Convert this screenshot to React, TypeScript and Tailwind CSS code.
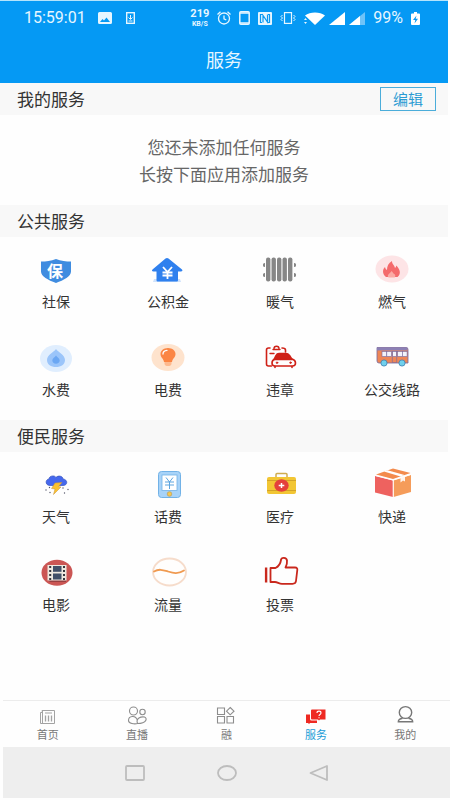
import type { ReactNode } from "react";

interface Service {
  name: string;
  icon: ReactNode;
}

interface Tab {
  name: string;
  icon: ReactNode;
  active?: boolean;
}

const publicServices: Service[] = [
  {
    name: "社保",
    icon: (
      <>
        <path d="M20 9c-5 2-10 2.500-15 2.500v10c0 5 7 8.500 15 11.500 8-3 15-6.500 15-11.500v-10c-5 0-10-.5-15-2.500z" fill="#3f8ce0" />
        <text x="19" y="26.500" textAnchor="middle" fontSize="16" fontWeight="700" fill="#fff">
          保
        </text>
      </>
    ),
  },
  {
    name: "公积金",
    icon: (
      <>
        <path d="M6 29h26l1 3H5z" fill="#cfe2fb" />
        <path d="M17.500 8.500q1.500-.8 3 0L34 19.500c1 1 0 2-1 2h-3v8.500c0 1-.5 1.500-1.500 1.500H10c-1 0-1.500-.5-1.500-1.500v-8.500h-3c-1.500 0-2-1-1-2z" fill="#2f80ee" />
        <path d="M15 17l4.500 5 4.500-5M19.500 22v7M14.500 22.500h10M14.500 25.500h10" stroke="#fff" strokeWidth="1.800" fill="none" />
      </>
    ),
  },
  {
    name: "暖气",
    icon: (
      <g fill="#868686">
        <rect x="6" y="7.500" width="4.400" height="24" rx="2" />
        <rect x="11.500" y="7.500" width="4.400" height="24" rx="2" />
        <rect x="17" y="7.500" width="4.400" height="24" rx="2" />
        <rect x="22.500" y="7.500" width="4.400" height="24" rx="2" />
        <rect x="28" y="7.500" width="4.400" height="24" rx="2" />
        <path d="M5 13v4c-2 0-2-1-2-2s0-2 2-2zM5 23v4c-2 0-2-1-2-2s0-2 2-2zM34 13v4c2 0 2-1 2-2s0-2-2-2zM34 23v4c2 0 2-1 2-2s0-2-2-2z" />
      </g>
    ),
  },
  {
    name: "燃气",
    icon: (
      <>
        <ellipse cx="20" cy="19" rx="16.500" ry="13.500" fill="#fde4e6" />
        <path d="M14 27c-4-3-3.500-8-1-10 .3 1.500 1 2.500 2 3 0-4 1.500-7 5-9-.2 3 2.500 4 3 7 .8-.6 1.200-1.500 1.200-2.500 3.500 3.500 5.500 8 1.300 11.500z" fill="#f46a6c" />
        <path d="M16.500 27.500c-1.500-2 0-3.500 1.200-4.300l2-2.200 1.800 2.500c1.800.8 2.500 2.500 1.200 4z" fill="#fba9a4" />
      </>
    ),
  },
  {
    name: "水费",
    icon: (
      <>
        <ellipse cx="20" cy="20.500" rx="16" ry="13.500" fill="#e0eefe" />
        <path d="M20 11c2 3 9 6 9 11 0 4.500-4 7-9 7s-9-2.500-9-7c0-5 7-8 9-11z" fill="#9bc5fa" />
        <path d="M20 17.500c1 1.500 3.700 3 3.700 5 0 2-1.700 3.200-3.700 3.200s-3.700-1.200-3.700-3.200c0-2 2.700-3.500 3.700-5z" fill="#6ba7f3" />
      </>
    ),
  },
  {
    name: "电费",
    icon: (
      <>
        <ellipse cx="20" cy="19.500" rx="16.500" ry="13.500" fill="#fee3cd" />
        <path d="M16.500 24h7v1.500c0 2-1.500 2.500-3.500 2.500s-3.500-.5-3.500-2.500z" fill="#fdb98e" />
        <path d="M20 10c4.500 0 7.500 2.800 7.500 6 0 3.500-3 4.500-3.500 8h-8c-.5-3.500-3.500-4.500-3.500-8 0-3.200 3-6 7.500-6z" fill="#fb8543" />
        <path d="M15 16c0-2 1.500-3.500 4-3.700" stroke="#fff" strokeWidth="1.300" fill="none" strokeLinecap="round" />
      </>
    ),
  },
  {
    name: "违章",
    icon: (
      <g fill="none" stroke="#cf2117" strokeWidth="1.600" strokeLinecap="round" strokeLinejoin="round">
        <path d="M11.500 28H8.500Q6.500 28 6.500 26V12Q6.500 10 8.500 10H10M22 10Q25.500 10 25.500 12V14" />
        <path d="M13 11.500h7M14 10.500c0-3 5-3 5 0M10 15.500h4" strokeWidth="1.400" />
        <path d="M14 21.500l2-4Q17 15.500 19 15.500h7Q28 15.500 29.500 17.500l2.500 4z" fill="#cf2117" />
        <path d="M15 21h17q3.500 1 3.500 4 0 3-3 3H15q-3 0-3-3 0-3 3-4z" />
        <path d="M15 28.500v1M32 28.500v1" />
        <circle cx="17" cy="24.700" r=".8" fill="#cf2117" strokeWidth=".8" />
        <circle cx="30.500" cy="24.700" r=".8" fill="#cf2117" strokeWidth=".8" />
      </g>
    ),
  },
  {
    name: "公交线路",
    icon: (
      <>
        <path d="M5 9.500h29q2 0 2 2V25H7q-2 0-2-2z" fill="#ee8656" stroke="#73679f" strokeWidth=".8" />
        <path d="M5 9.500h30.500v3H5z" fill="#8c80b5" />
        <g fill="#f2f3fb" stroke="#73679f" strokeWidth=".6">
          <rect x="10" y="13.500" width="4.800" height="5" />
          <rect x="14.800" y="13.500" width="4.800" height="5" />
          <rect x="25.500" y="13.500" width="4.800" height="5" />
          <rect x="30.300" y="13.500" width="4.800" height="5" />
          <rect x="20.200" y="13.500" width="4.600" height="11" fill="#ee8656" />
          <rect x="20.700" y="13.500" width="3.600" height="5" />
        </g>
        <circle cx="12" cy="25" r="3.100" fill="#70d1ed" stroke="#3f80b0" strokeWidth=".8" />
        <circle cx="30" cy="25" r="3.100" fill="#70d1ed" stroke="#3f80b0" strokeWidth=".8" />
      </>
    ),
  },
];

const lifeServices: Service[] = [
  {
    name: "天气",
    icon: (
      <>
        <path d="M14 20.500c-5 0-5-6-1-6.500 0-3.500 6-4 7-1.500 2-2.500 7-1.500 7 1.500 5 .5 5 6.500 0 6.500z" fill="#4568ee" stroke="#3855bc" strokeWidth=".7" />
        <path d="M19 18l7-.5-3.500 4 2.500.5-7.500 7.500 1.500-5.500-3.500-.5z" fill="#fbc22e" stroke="#c6913b" strokeWidth=".5" />
        <g fill="#55576a">
          <circle cx="10" cy="25" r=".7" />
          <circle cx="13.500" cy="22.500" r=".7" />
          <circle cx="14" cy="27.500" r=".7" />
          <circle cx="27" cy="23" r=".7" />
          <circle cx="32" cy="24.500" r=".7" />
          <circle cx="28.500" cy="28" r=".7" />
        </g>
      </>
    ),
  },
  {
    name: "话费",
    icon: (
      <>
        <rect x="10.500" y="6.500" width="22" height="26" rx="3" fill="#a8d3f8" stroke="#72b2e7" />
        <rect x="14" y="10" width="15" height="15.500" fill="#fff" stroke="#72b2e7" strokeWidth=".8" />
        <path d="M18 12.500l3.500 4.500 3.500-4.500M21.500 16.500V24M17 17h9M17 20h9" fill="none" stroke="#5da5df" />
        <circle cx="21.500" cy="29" r="2.300" fill="#f6c74e" stroke="#b99d62" strokeWidth=".7" />
      </>
    ),
  },
  {
    name: "医疗",
    icon: (
      <>
        <path d="M16 12V9.500q0-1 1-1h9q1 0 1 1V12" fill="none" stroke="#cfac50" strokeWidth="1.500" />
        <rect x="7" y="12" width="29" height="17" rx="2" fill="#f2c634" />
        <path d="M7 15.500h29M7 25.500h29" stroke="#c99b27" strokeWidth=".8" />
        <ellipse cx="21.500" cy="20.500" rx="7.200" ry="6.200" fill="#e4403c" />
        <path d="M21.500 18v5M18.700 20.500h5.600" stroke="#fff" strokeWidth="1.500" />
      </>
    ),
  },
  {
    name: "快递",
    icon: (
      <>
        <path d="M3 11l18 4.500V32L3 27.500z" fill="#ee625f" />
        <path d="M21.500 15.500L39 10v17l-17.500 5z" fill="#f59c5a" />
        <path d="M4 9.500L21 3.500 38.500 8 21 14z" fill="#f38b4d" />
        <path d="M12 6.500l3.500-1.200L32.500 10l-4 1.500z" fill="#fff" />
        <path d="M28.500 11.500l4.500-1.500v6.500l-2-1-2.500 2z" fill="#fff5ef" />
        <path d="M3.500 10.500l17.500 4.500 17.500-5.500M21.200 15v17" fill="none" stroke="#fff" strokeWidth="1" />
      </>
    ),
  },
  {
    name: "电影",
    icon: (
      <>
        <ellipse cx="21" cy="19.700" rx="15.500" ry="13" fill="#cb5654" />
        <path d="M12 27l2 2h16V13l-2-1z" fill="#983f41" />
        <rect x="11.500" y="12" width="19" height="15.500" fill="#eee8df" />
        <g fill="#425068">
          <rect x="17" y="13" width="8.500" height="5.800" />
          <rect x="17" y="20.500" width="8.500" height="6" />
        </g>
        <path d="M14.200 13v14M28 13v14" stroke="#36363d" strokeWidth="2" strokeDasharray="2 2" />
      </>
    ),
  },
  {
    name: "流量",
    icon: (
      <>
        <ellipse cx="21.500" cy="19" rx="16.500" ry="13.500" fill="#fffefd" stroke="#f6dccb" strokeWidth="1.800" />
        <path d="M6 18.500c5-3 9-1.500 14 0s10 3 16-1" fill="none" stroke="#f09a50" strokeWidth="1.800" strokeLinecap="round" />
      </>
    ),
  },
  {
    name: "投票",
    icon: (
      <g fill="none" stroke="#c9281d" strokeWidth="1.800" strokeLinejoin="round">
        <path d="M5.500 14.500v15M6.700 14.500v15" strokeWidth="1.200" />
        <path d="M10.500 15h5c3-1.500 5-4.500 5.500-8 .3-3 5.500-3 6 .5.300 2.500-.5 5-1.500 7h9.500c2 0 2.500 1 2.300 2.500L36 28c-.2 2-1.500 2.800-3.500 2.800H22c-3 0-4.500-1.800-7-1.800h-4.500z" />
      </g>
    ),
  },
];

const tabs: Tab[] = [
  {
    name: "首页",
    icon: (
      <g stroke="#a3a3a3" strokeWidth="1">
        <path d="M8 5.500h12.500v13H6.500v-11h2zM8.500 5.500v13M11 8h7" />
        <path d="M11.500 10.500v6M14.500 10.500v6M17.500 10.500v6" strokeWidth="1.300" />
      </g>
    ),
  },
  {
    name: "直播",
    icon: (
      <>
        <circle cx="10.500" cy="6" r="4" />
        <circle cx="19.500" cy="7" r="2.700" />
        <path d="M14.500 18.500c-3 1-9 0-9-3 0-4.500 7-6 9 0M14.500 18.500c-2-5.500 3.500-7 7-6.500 3 1 2.500 6.500-7 6.500z" />
      </>
    ),
  },
  {
    name: "融",
    icon: (
      <>
        <path d="M5.500 3h7v6.500h-7zM5.500 11.500h7V18h-7zM15 11.500h6.500V18H15z" />
        <path d="M18.200 2.500l3.800 3.700-3.800 3.600-3.700-3.600z" />
      </>
    ),
  },
  {
    name: "服务",
    active: true,
    icon: (
      <>
        <path d="M4 9.500h4V14q0 1.500 1.500 1.500H15V18H8l-1 1-1-1H4z" fill="#ee2922" stroke="none" />
        <path d="M10 4.500h13.500v10H18l-1 1-1-1h-6q-1 0-1-1v-8q0-1 1-1z" fill="#ee2922" stroke="none" />
        <path d="M15 8c0-2.500 4-2.500 4 0 0 1.500-2 1.500-2 3M17 12.200v1" stroke="#fff" strokeWidth="1.100" />
      </>
    ),
  },
  {
    name: "我的",
    icon: (
      <g strokeWidth="1.400" stroke="#777">
        <ellipse cx="14.500" cy="7.500" rx="6.200" ry="5.900" />
        <path d="M11.500 13.200c-2.500.5-4.200 1.500-4.200 3.500h14.400c0-2-1.700-3-4.200-3.500" />
      </g>
    ),
  },
];

function SectionTitle({ title, children }: { title: string; children?: ReactNode }) {
  return (
    <div className="flex h-8 items-center justify-between bg-[#f8f8f8] pl-[17px] pr-3">
      <h2 className="text-[17px] leading-6 text-[#333]">{title}</h2>
      {children}
    </div>
  );
}

function ServiceGrid({ services }: { services: Service[] }) {
  return (
    <div className="grid grid-cols-4 gap-y-[26px] pb-5 pt-[13px]">
      {services.map((service) => (
        <button key={service.name} type="button" className="flex flex-col items-center gap-px pb-px">
          <svg viewBox="0 0 40 40" className="size-10" aria-hidden="true">
            {service.icon}
          </svg>
          <span className="text-sm text-[#333]">{service.name}</span>
        </button>
      ))}
    </div>
  );
}

function StatusBar() {
  return (
    <div className="flex h-[34px] items-center gap-2 pl-6 pr-7 font-[Roboto,sans-serif] text-[#e6f6ff]">
      <span className="text-base leading-5">15:59:01</span>
      <div className="flex items-center gap-3.5 pl-1">
        <svg viewBox="0 0 14 12" className="h-3 w-3.5" aria-hidden="true">
          <path fillRule="evenodd" d="M1.500 0h11Q14 0 14 1.500v9q0 1.500-1.500 1.500h-11Q0 12 0 10.500v-9Q0 0 1.500 0zM2 10h10L8.500 5.500 6 8.500 4.500 7z" fill="currentColor" />
        </svg>
        <svg viewBox="0 0 9 12" className="h-3 w-[9px]" fill="none" stroke="currentColor" aria-hidden="true">
          <rect x=".7" y=".7" width="7.600" height="10.600" strokeWidth="1.400" />
          <path d="M4.500 3v4M2.500 5.500l2 2 2-2M2.500 9h4" />
        </svg>
      </div>
      <div className="ml-auto flex flex-col items-center font-bold">
        <span className="text-[11px] leading-3">219</span>
        <span className="text-[7px] leading-2">KB/S</span>
      </div>
      <svg viewBox="0 0 14 14" className="size-3.5" fill="none" stroke="currentColor" strokeWidth="1.300" aria-hidden="true">
        <circle cx="7" cy="7.500" r="5.500" />
        <path d="M7 4.500v3.300l2.300 1.200M.5 3.500L3.500 .8M13.500 3.500L10.500 .8" />
      </svg>
      <svg viewBox="0 0 11 14" className="h-3.5 w-[11px]" fill="none" stroke="currentColor" aria-hidden="true">
        <rect x=".8" y=".8" width="9.400" height="12.400" rx="1" strokeWidth="1.500" />
        <path d="M1 2h9M1 12h9" strokeWidth="1.500" />
      </svg>
      <svg viewBox="0 0 14 13" className="h-[13px] w-3.5" aria-hidden="true">
        <rect width="14" height="13" rx="1" fill="currentColor" />
        <path d="M4.500 2.500H2.500v8H4M9.500 10.500h2v-8H10M5 10.500v-7l4.500 6.500V2.500" fill="none" stroke="#0a99f2" strokeWidth="1.200" />
      </svg>
      <svg viewBox="0 0 16 12" className="h-3 w-4" fill="none" stroke="currentColor" aria-hidden="true">
        <rect x="4.500" y=".6" width="7" height="10.800" strokeWidth="1.200" />
        <path d="M2.500 3L1 4.500 2.500 6 1 7.500 2.500 9M13.500 3L15 4.500 13.500 6 15 7.500 13.500 9" />
      </svg>
      <div className="flex items-center gap-1">
        <svg viewBox="0 0 21 13" className="h-[13px] w-[21px]" aria-hidden="true">
          <path d="M1 3.500C6-.5 16-.5 21 3.500L11 13z" fill="#fff" />
          <path d="M0 8l1.500-2L3 8zM0 10l1.500 2L3 10z" fill="currentColor" />
        </svg>
        <svg viewBox="0 0 16 13" className="h-[13px] w-4" aria-hidden="true">
          <path d="M16 0v13H0z" fill="#fff" />
        </svg>
        <svg viewBox="0 0 16 13" className="h-[13px] w-4" aria-hidden="true">
          <path d="M16 0v13H0z" fill="#6fc3f8" />
          <path d="M11 4v9H0z" fill="#fff" />
        </svg>
      </div>
      <span className="text-base leading-5">99%</span>
      <svg viewBox="0 0 9 13" className="h-[13px] w-[9px]" aria-hidden="true">
        <path d="M3 0h3v1.500h2q1 0 1 1V12q0 1-1 1H1q-1 0-1-1V2.500q0-1 1-1h2z" fill="#fff" />
        <path d="M5.500 3.500L2 8h2.300l-.8 3.500L7 6.700H4.700z" fill="#0a99f2" />
      </svg>
    </div>
  );
}

export default function App() {
  return (
    <div className="flex min-h-screen flex-col bg-[#fefefe] font-['Noto_Sans_CJK_SC',sans-serif]">
      {/* Header */}
      <header className="mr-0.5 border-t border-[#b5e4fc] bg-[#0599f4]">
        <StatusBar />
        <h1 className="flex h-12 items-center justify-center text-lg text-[#e6f6ff]">服务</h1>
      </header>

      {/* Services */}
      <main className="mr-0.5 flex-1">
        <section>
          <SectionTitle title="我的服务">
            <button
              type="button"
              className="flex h-6 w-14 items-center justify-center border border-[#4badda] text-[15px] text-[#2b9bd3]"
            >
              编辑
            </button>
          </SectionTitle>
          <p className="py-[18px] text-center text-[17px] leading-[27px] text-[#666]">
            您还未添加任何服务
            <br />
            长按下面应用添加服务
          </p>
        </section>

        <section>
          <SectionTitle title="公共服务" />
          <ServiceGrid services={publicServices} />
        </section>

        <section>
          <SectionTitle title="便民服务" />
          <ServiceGrid services={lifeServices} />
        </section>
      </main>

      {/* Tab bar */}
      <nav className="ml-[3px] grid grid-cols-5 border-t border-[#ececec] pb-[5px] pt-[3px]">
        {tabs.map((tab) => (
          <a key={tab.name} href="#" className="flex flex-col items-center">
            <svg
              viewBox="0 0 28 20"
              className="h-[22px] w-7"
              fill="none"
              stroke="#8d8d8d"
              strokeWidth="1.100"
              aria-hidden="true"
            >
              {tab.icon}
            </svg>
            <span className={tab.active ? "text-[11px] leading-4 text-[#209bd6]" : "text-[11px] leading-4 text-[#777]"}>
              {tab.name}
            </span>
          </a>
        ))}
      </nav>

      {/* System navigation */}
      <div className="mb-0.5 ml-[3px] flex h-[51px] items-center justify-center gap-[72px] bg-[#eee]">
        <button type="button" aria-label="最近任务">
          <svg viewBox="0 0 20 16" className="h-4 w-5" fill="none" stroke="#bdbdbd" strokeWidth="1.800">
            <rect x="1" y="1" width="18" height="14" rx="1" />
          </svg>
        </button>
        <button type="button" aria-label="主屏幕">
          <svg viewBox="0 0 20 16" className="h-4 w-5" fill="none" stroke="#bdbdbd" strokeWidth="1.800">
            <ellipse cx="10" cy="8" rx="9" ry="7" />
          </svg>
        </button>
        <button type="button" aria-label="返回">
          <svg viewBox="0 0 20 16" className="h-4 w-5" fill="none" stroke="#bdbdbd" strokeWidth="1.800" strokeLinejoin="round">
            <path d="M18 1v14L1.500 8z" />
          </svg>
        </button>
      </div>
    </div>
  );
}
